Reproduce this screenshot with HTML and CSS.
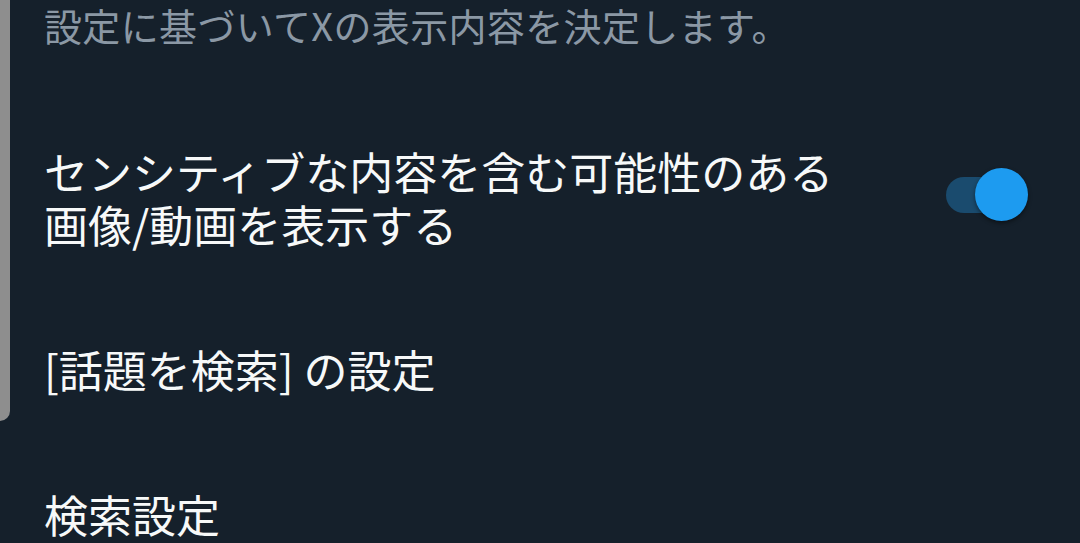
FILE: index.html
```html
<!DOCTYPE html>
<html lang="ja">
<head>
  <meta charset="UTF-8">
  <meta name="viewport" content="width=device-width, initial-scale=1.0">
  <title>コンテンツ設定</title>
  <link rel="stylesheet" href="styles.css">
</head>
<body>
  <div class="edge"></div>

  <div class="settings">
    <p class="desc">設定に基づいてXの表示内容を決定します。</p>

    <div class="row">
      <span class="label wide">センシティブな内容を含む可能性のある画像/動画を表示する</span>
      <span class="toggle on">
        <span class="track"></span>
        <span class="thumb"></span>
      </span>
    </div>

    <div class="row">
      <span class="label">[話題を検索] の設定</span>
    </div>

    <div class="row">
      <span class="label">検索設定</span>
    </div>
  </div>
</body>
</html>
```

FILE: styles.css
```css
body {
  margin: 0;
  background-color: #15202b;
  font-family: "Noto Sans CJK JP", "Noto Sans", sans-serif;
  color: #f7f9f9;
  overflow: hidden;
}
.edge {
  position: absolute;
  left: 0;
  top: 0;
  width: 10px;
  height: 421px;
  background-color: #8e8e8e;
  border-bottom-right-radius: 10px;
}
.settings {
  padding: 0 52px 0 44px;
}
.desc {
  margin: 0 0 49px;
  font-size: 38px;
  line-height: 50px;
  letter-spacing: 0.35px;
  color: #8b98a5;
}
.row {
  display: flex;
  align-items: center;
  justify-content: space-between;
  padding: 46px 0;
}
.label {
  font-size: 44px;
  line-height: 53px;
}
.label.wide {
  max-width: 800px;
}
.toggle {
  position: relative;
  width: 82px;
  height: 53px;
  margin-top: -8px;
}
.track {
  position: absolute;
  left: 0;
  top: 9px;
  width: 64px;
  height: 36px;
  border-radius: 18px;
  background-color: #1a4b6e;
}
.thumb {
  position: absolute;
  right: 0;
  top: 0;
  width: 53px;
  height: 53px;
  border-radius: 50%;
  background-color: #1d9bf0;
  box-shadow: 0 2px 4px rgba(0, 0, 0, 0.45);
}
```
